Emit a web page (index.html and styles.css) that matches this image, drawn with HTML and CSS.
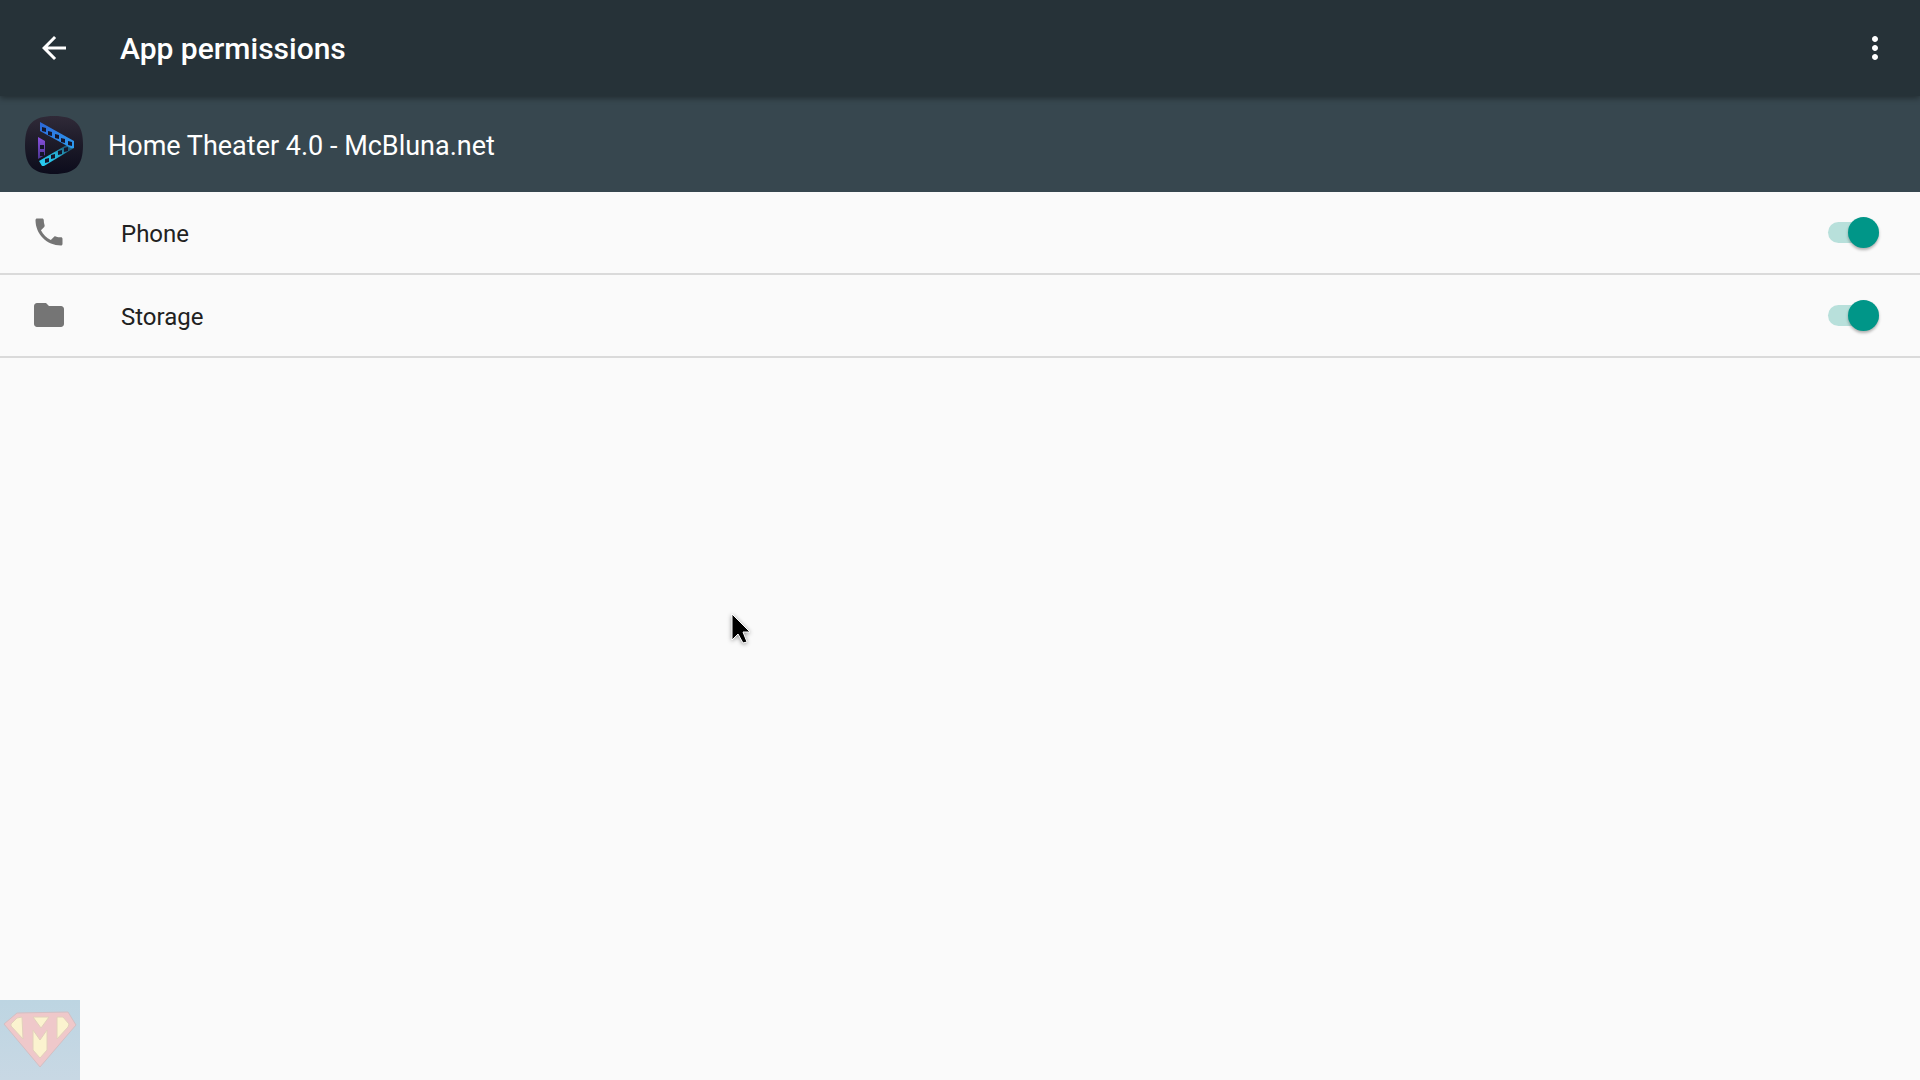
FILE: index.html
```html
<!DOCTYPE html>
<html lang="en">
<head>
    <meta charset="UTF-8">
    <meta name="viewport" content="width=device-width, initial-scale=1.0">
    <title>App permissions</title>
    <link rel="stylesheet" href="styles.css">
</head>
<body>

    <header class="toolbar">
        <button class="icon-button" type="button" aria-label="Back">
            <svg class="icon" viewBox="0 0 24 24"><path d="M20 11H7.83l5.59-5.59L12 4l-8 8 8 8 1.41-1.41L7.83 13H20v-2z"/></svg>
        </button>
        <h1>App permissions</h1>
        <button class="icon-button" type="button" aria-label="More options">
            <svg class="icon" viewBox="0 0 24 24"><path d="M12 8c1.1 0 2-.9 2-2s-.9-2-2-2-2 .9-2 2 .9 2 2 2zm0 2c-1.1 0-2 .9-2 2s.9 2 2 2 2-.9 2-2-.9-2-2-2zm0 6c-1.1 0-2 .9-2 2s.9 2 2 2 2-.9 2-2-.9-2-2-2z"/></svg>
        </button>
    </header>

    <main>
        <div class="app">
            <svg class="app-icon" viewBox="0 0 58 58">
                <defs>
                    <linearGradient id="tile" x1="0" y1="0" x2="0" y2="1">
                        <stop offset="0" stop-color="#302a38"/>
                        <stop offset="0.5" stop-color="#1c1a28"/>
                        <stop offset="1" stop-color="#0c0c1c"/>
                    </linearGradient>
                    <linearGradient id="top" x1="0" y1="0" x2="1" y2="1">
                        <stop offset="0" stop-color="#2c66d8"/>
                        <stop offset="1" stop-color="#2d9cf0"/>
                    </linearGradient>
                    <linearGradient id="side" x1="0" y1="0" x2="0" y2="1">
                        <stop offset="0" stop-color="#8a50e0"/>
                        <stop offset="1" stop-color="#4a3590"/>
                    </linearGradient>
                    <linearGradient id="bottom" x1="0" y1="1" x2="1" y2="0">
                        <stop offset="0" stop-color="#28d2f8"/>
                        <stop offset="0.5" stop-color="#25b0d4"/>
                        <stop offset="0.8" stop-color="#1c5a78"/>
                        <stop offset="1" stop-color="#2db4f0"/>
                    </linearGradient>
                </defs>
                <path fill="url(#tile)" d="M29 0C50 0 58 8 58 29S50 58 29 58 0 50 0 29 8 0 29 0z"/>
                <path fill="url(#side)" d="M13 21l7 4v14l-7 4z"/>
                <path fill="url(#bottom)" d="M14 45l31-18 4 5L19 50h-2z"/>
                <path fill="url(#top)" d="M15 6l34 19v7h-3L15 15z"/>
                <!-- film perforations -->
                <g fill="#15152a">
                    <path d="M15 29h4v4h-4zM15 36h4v4h-4z"/>
                    <path d="M17 11l4 1v4l-4-1zM23 15l4 1v4l-4-1zM30 18l4 1v4l-4-1zM36 22l4 1v4l-4-1zM43 25l4 1v4l-4-1z"/>
                    <path d="M20 43l4-1v4l-4 1zM26 39l4-1v4l-4 1zM33 35l4-1v4l-4 1zM39 32l4-1v4l-4 1z"/>
                </g>
            </svg>
            <h2>Home Theater 4.0 - McBluna.net</h2>
        </div>

        <ul class="permissions">
            <li>
                <svg class="icon" viewBox="0 0 24 24"><path d="M6.62 10.79c1.44 2.83 3.76 5.14 6.59 6.59l2.2-2.2c.27-.27.67-.36 1.02-.24 1.12.37 2.33.57 3.57.57.55 0 1 .45 1 1V20c0 .55-.45 1-1 1-9.39 0-17-7.61-17-17 0-.55.45-1 1-1h3.5c.55 0 1 .45 1 1 0 1.25.2 2.45.57 3.57.11.35.03.74-.25 1.02l-2.2 2.2z"/></svg>
                <label for="phone">Phone</label>
                <input class="switch" type="checkbox" id="phone" checked>
            </li>
            <li>
                <svg class="icon" viewBox="0 0 24 24"><path d="M10 4H4c-1.1 0-1.99.9-1.99 2L2 18c0 1.1.9 2 2 2h16c1.1 0 2-.9 2-2V8c0-1.1-.9-2-2-2h-8l-2-2z"/></svg>
                <label for="storage">Storage</label>
                <input class="switch" type="checkbox" id="storage" checked>
            </li>
        </ul>
    </main>

    <!-- channel watermark -->
    <svg class="watermark" viewBox="0 0 80 80">
        <defs>
            <linearGradient id="sky" x1="0" y1="0" x2="0" y2="1">
                <stop offset="0" stop-color="#bdd5e2"/>
                <stop offset="1" stop-color="#c8d8e4"/>
            </linearGradient>
        </defs>
        <path fill="url(#sky)" d="M0 0h80v80H0z"/>
        <path fill="#efc8ca" stroke="#d3bfc3" d="M17 13l51-1 8 13-36 42L4 24z"/>
        <g fill="#fbf3cf" stroke="#e2d0bc">
            <path d="M11 24l6-6 5-1 1 22L11 26z"/>
            <path d="M33 17h16l-8 11z"/>
            <path d="M33 30l7 10 7-10v20l-7 8-7-8z"/>
            <path d="M57 17h6l6 7-1 3-11 12z"/>
        </g>
    </svg>

    <svg class="pointer" viewBox="0 0 20 32">
        <path d="M1 1v26l6-6 5 9 4-1-4-10h7z"/>
    </svg>

</body>
</html>
```
FILE: styles.css
```css
* { box-sizing: border-box; }

body { margin: 0; background: #fafafa; color: #212121; font-family: Roboto, sans-serif; }

h1, h2 { margin: 0; padding-top: 2px; flex: 1; color: #fff; }
h1 { font-size: 30px; font-weight: 500; line-height: 36px; }
h2 { font-size: 27px; font-weight: 400; line-height: 32px; }

.icon { display: block; width: 36px; height: 36px; fill: currentColor; }

.toolbar {
    position: relative;
    display: flex;
    align-items: center;
    gap: 48px;
    height: 96px;
    padding: 0 27px 0 36px;
    background: #263238;
    box-shadow: 0 2px 6px rgba(0, 0, 0, 0.4);
}

.icon-button { padding: 0; border: none; background: none; color: #fff; cursor: pointer; }

.app {
    display: flex;
    align-items: center;
    gap: 25px;
    height: 96px;
    padding: 1px 25px 0;
    background: #37474f;
}
.app-icon { width: 58px; height: 58px; }

.permissions { margin: 0; padding: 0; list-style: none; }
.permissions li {
    display: flex;
    align-items: center;
    height: 83px;
    padding: 0 41px 0 31px;
    border-bottom: 2px solid #dadada;
}
.permissions .icon { margin-bottom: 1px; color: #757575; }
.permissions label { flex: 1; padding: 2px 0 0 54px; font-size: 24px; line-height: 28px; }

.switch {
    appearance: none;
    display: flex;
    align-items: center;
    justify-content: flex-end;
    width: 51px;
    height: 21px;
    margin: 0;
    border-radius: 11px;
    background: #b8e0db;
}
.switch::before {
    content: "";
    flex: none;
    width: 31px;
    height: 31px;
    border-radius: 50%;
    background: #009688;
    box-shadow: 0 2px 3px rgba(0, 0, 0, 0.3);
}

.watermark { position: fixed; left: 0; bottom: 0; width: 80px; height: 80px; }

.pointer {
    position: fixed;
    left: 731px;
    top: 613px;
    width: 20px;
    height: 32px;
    overflow: visible;
    fill: #000;
    stroke: #fff;
    stroke-width: 1;
    filter: drop-shadow(0 1px 2px rgba(0, 0, 0, 0.4));
}
```
